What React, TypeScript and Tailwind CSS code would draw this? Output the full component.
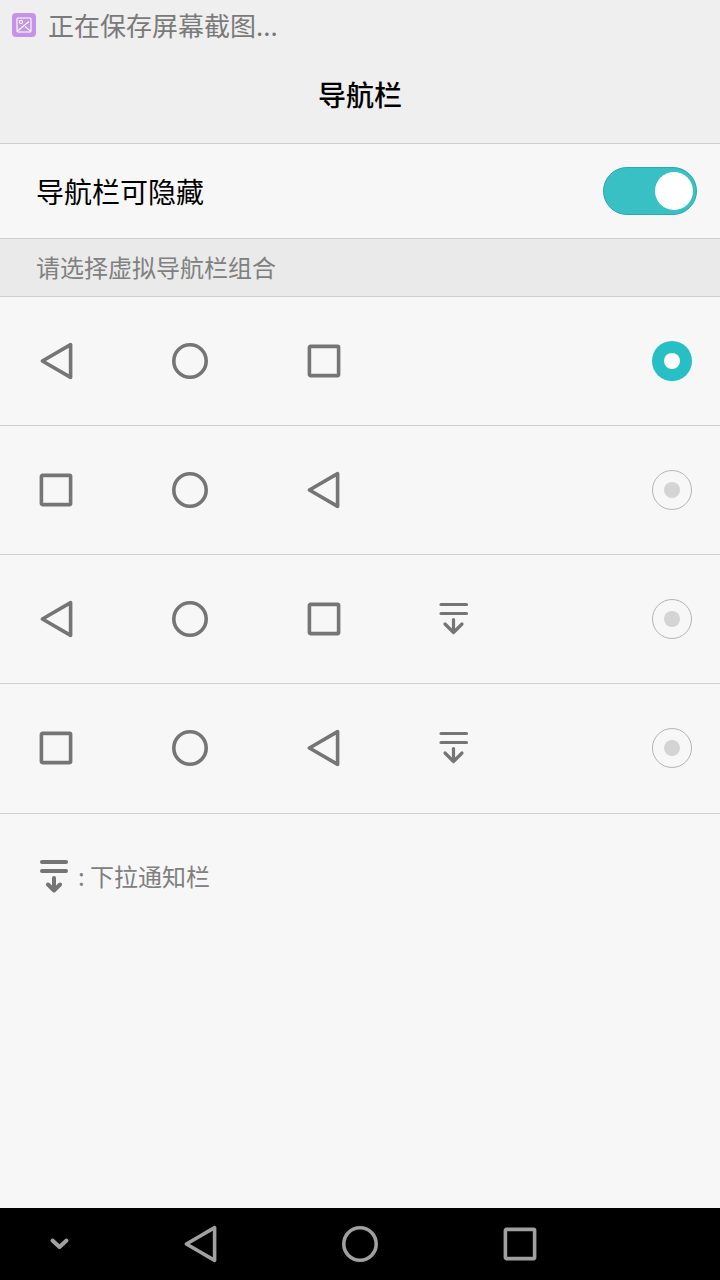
const font = "font-['Noto_Sans_CJK_SC','Noto_Sans',sans-serif]";

function Back({ color = "#757575" }: { color?: string }) {
  return (
    <svg width="40" height="40" viewBox="0 0 40 40" fill="none" stroke={color} strokeWidth="3.6" strokeLinejoin="round">
      <path d="M34.6 3.6V36.4L6.4 20Z" />
    </svg>
  );
}

function Home({ color = "#757575" }: { color?: string }) {
  return (
    <svg width="40" height="40" viewBox="0 0 40 40" fill="none" stroke={color} strokeWidth="3.6">
      <circle cx="20" cy="20" r="16.2" />
    </svg>
  );
}

function Recent({ color = "#757575" }: { color?: string }) {
  return (
    <svg width="40" height="40" viewBox="0 0 40 40" fill="none" stroke={color} strokeWidth="3.6">
      <rect x="5.4" y="5.4" width="29.2" height="29.2" rx="1" />
    </svg>
  );
}

function PullDown() {
  return (
    <svg width="40" height="40" viewBox="0 0 40 40" fill="none" stroke="#757575" strokeWidth="3.2" strokeLinecap="round" strokeLinejoin="round">
      <path d="M3 5.5H28.5M3 14.5H28.5" />
      <path d="M15.5 20.5V33.5M7 25L15.5 33.5L24 25" />
    </svg>
  );
}

function Radio({ checked }: { checked?: boolean }) {
  if (checked) {
    return (
      <div className="w-10 h-10 rounded-full bg-[#26bfc6] flex items-center justify-center">
        <div className="w-4 h-4 rounded-full bg-white" />
      </div>
    );
  }
  return (
    <div className="w-10 h-10 rounded-full border border-[#b4b4b4] flex items-center justify-center">
      <div className="w-4 h-4 rounded-full bg-[#d4d4d4]" />
    </div>
  );
}

function ComboRow({ first, third, pull, checked, last }: { first: "back" | "recent"; third: "back" | "recent"; pull?: boolean; checked?: boolean; last?: boolean }) {
  return (
    <div className={`${last ? "h-[130px] pb-px" : "h-[129px]"} border-b border-[#cfcfcf] flex items-center pl-9 pr-7`}>
      <div className="w-[134px]">{first === "back" ? <Back /> : <Recent />}</div>
      <div className="w-[134px]"><Home /></div>
      <div className={third === "back" ? "w-[134px] -ml-px" : "w-[134px]"}>{third === "back" ? <Back /> : <Recent />}</div>
      <div className={third === "back" ? "ml-[1px]" : ""}>{pull && <PullDown />}</div>
      <div className="ml-auto"><Radio checked={checked} /></div>
    </div>
  );
}

export default function App() {
  return (
    <div className={`${font} w-[720px] h-[1280px] flex flex-col bg-[#f7f7f7]`}>
      <header className="h-[144px] shrink-0 bg-[#efefef] border-b border-[#cfcfcf]">
        <div className="h-[50px] flex items-center pl-3 gap-3">
          <div className="w-6 h-6 rounded-[4px] bg-[#c594e8] flex items-center justify-center">
            <svg width="16" height="16" viewBox="0 0 16 16" fill="none" stroke="#fff" strokeWidth="1.1">
              <rect x="1" y="1" width="14" height="14" rx="1" />
              <circle cx="5" cy="5" r="1.6" />
              <path d="M1.5 14L13 4.5M9 9.5L14.5 14" />
            </svg>
          </div>
          <span className="text-[26px] text-[#7a7a7a] -mt-[2px]">正在保存屏幕截图...</span>
        </div>
        <h1 className="h-[88px] flex items-center justify-center text-[28px] font-medium text-black">导航栏</h1>
      </header>

      <div className="h-[95px] shrink-0 border-b border-[#cfcfcf] flex items-center justify-between pl-9 pr-[23px]">
        <span className="text-[28px] text-black">导航栏可隐藏</span>
        <div className="w-[94px] h-12 rounded-full bg-[#38c0c4] border border-[#2aa9b0] flex items-center justify-end pr-[3px]">
          <div className="w-[38px] h-[38px] rounded-full bg-white" />
        </div>
      </div>

      <div className="h-[58px] shrink-0 bg-[#eaeaea] border-b border-[#cfcfcf] flex items-center pl-9 pb-[2px] text-2xl text-[#808080]">
        请选择虚拟导航栏组合
      </div>

      <ComboRow first="back" third="recent" checked />
      <ComboRow first="recent" third="back" />
      <ComboRow first="back" third="recent" pull />
      <ComboRow first="recent" third="back" pull last />

      <div className="flex-1 pl-10 pt-[44px]">
        <div className="flex items-center h-9">
          <svg width="28" height="34" viewBox="0 0 28 34" fill="none" stroke="#757575" strokeWidth="4" strokeLinecap="round" strokeLinejoin="round">
            <path d="M2 3H26M2 12H26" />
            <path d="M14 19V31M8 25.5L14 31.5L20 25.5" />
          </svg>
          <span className="ml-[10px] text-2xl text-[#808080]">: 下拉通知栏</span>
        </div>
      </div>

      <nav className="h-[72px] shrink-0 bg-black flex items-center pl-10">
        <svg width="40" height="40" viewBox="0 0 40 40" fill="none" stroke="#a0a0a0" strokeWidth="4" strokeLinecap="round" strokeLinejoin="round" className="mr-[100px]">
          <path d="M12.5 16.5L19.5 23L26.5 16.5" />
        </svg>
        <div className="flex items-center gap-[120px]">
          <Back color="#a0a0a0" />
          <Home color="#a0a0a0" />
          <Recent color="#a0a0a0" />
        </div>
      </nav>
    </div>
  );
}
